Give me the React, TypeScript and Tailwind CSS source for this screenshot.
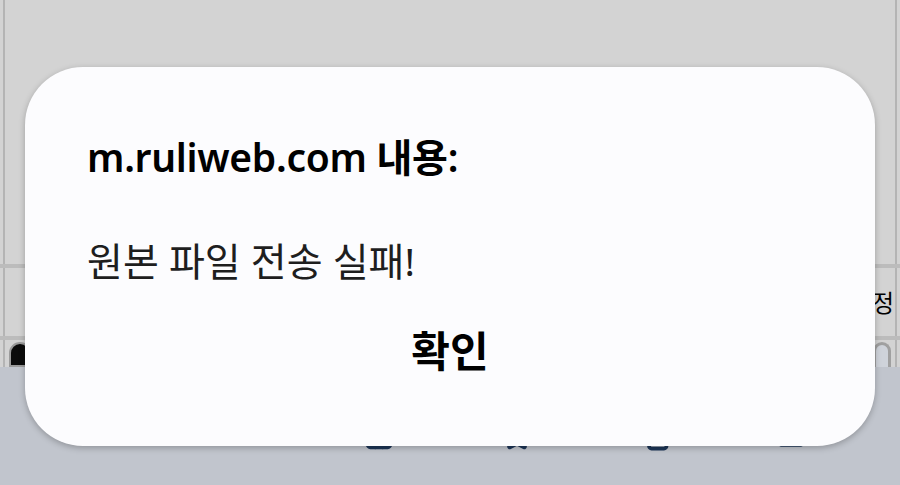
import { ChevronLeft, ChevronRight, Home, Star, Copy, Menu } from "lucide-react";

const font = { fontFamily: '"Noto Sans", "Noto Sans CJK KR", sans-serif' };

function Background() {
  return (
    <div className="flex h-[485px] w-[900px] flex-col bg-[#c1c5cd]">
      {/* page content behind the dialog */}
      <div className="flex h-[264px] bg-[#d3d3d3]">
        <div className="ml-[3px] w-[2px] bg-[#b4b4b4]" />
        <div className="flex-1" />
        <div className="mr-[3px] w-[2px] bg-[#b4b4b4]" />
      </div>
      <div className="h-[4px] bg-[#bcbcbc]" />
      <div className="flex h-[68px] bg-[#d3d3d3]">
        <div className="ml-[3px] w-[2px] bg-[#b4b4b4]" />
        <div className="flex flex-1 items-center justify-end pt-[2px]">
          <span className="mr-[1px] text-[24px] leading-none text-black">정</span>
        </div>
        <div className="mr-[3px] w-[2px] bg-[#b4b4b4]" />
      </div>
      <div className="h-[4px] bg-[#bcbcbc]" />
      <div className="flex h-[27px] items-end bg-[#d3d3d3]">
        <div className="ml-[3px] h-full w-[2px] bg-[#b4b4b4]" />
        <div className="ml-[4px] h-[25px] w-[22px] rounded-t-[12px] border-2 border-[#9a9a9a] bg-[#0b0b0b]" />
        <div className="flex-1" />
        <div className="mr-[4px] h-[25px] w-[18px] rounded-t-[10px] border-[3px] border-b-0 border-[#a0a0a0] bg-[#cfd3da]" />
        <div className="mr-[3px] h-full w-[2px] bg-[#b4b4b4]" />
      </div>
      {/* browser toolbar, mostly hidden */}
      <div className="flex h-[118px] items-start justify-around px-[40px] pt-[54px] text-[#1d3557]">
        <ChevronLeft size={28} strokeWidth={3} />
        <ChevronRight size={28} strokeWidth={3} className="text-[#7a8597]" />
        <Home size={30} strokeWidth={3} />
        <Star size={30} strokeWidth={3} />
        <Copy size={30} strokeWidth={3} />
        <Menu size={30} strokeWidth={3} />
      </div>
    </div>
  );
}

export default function App() {
  return (
    <div className="relative h-[485px] w-[900px] overflow-hidden" style={font}>
      <Background />
      <div className="absolute left-[25px] top-[67px] flex h-[379px] w-[850px] flex-col rounded-[58px] bg-[#fcfcfe] pl-[62px] pt-[66px] shadow-[0_2px_6px_rgba(0,0,0,0.25)]">
        <h1 className="text-[39px] font-semibold leading-[48px] tracking-[-0.3px] text-black">
          m.ruliweb.com 내용:
        </h1>
        <p className="mt-[56px] text-[39px] leading-[48px] text-[#1e1e1e]">
          원본 파일 전송 실패!
        </p>
        <div className="mt-[42px] -ml-[62px] flex justify-center">
          <button className="text-[42px] font-bold leading-[48px] text-black">확인</button>
        </div>
      </div>
    </div>
  );
}
